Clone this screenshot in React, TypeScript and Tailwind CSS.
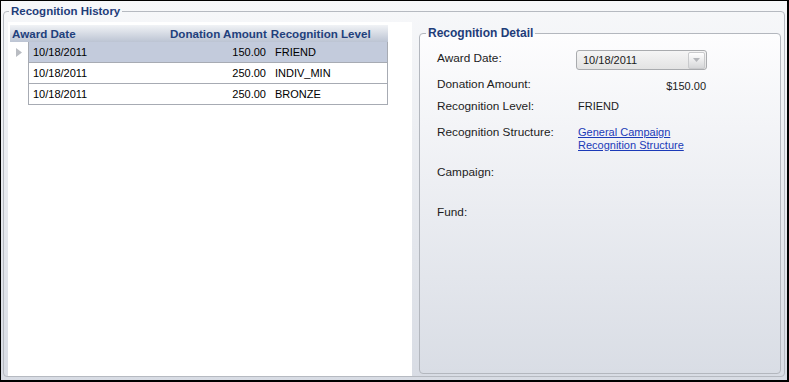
import React from "react";

const rows = [
  { date: "10/18/2011", amount: "150.00", level: "FRIEND", selected: true },
  { date: "10/18/2011", amount: "250.00", level: "INDIV_MIN", selected: false },
  { date: "10/18/2011", amount: "250.00", level: "BRONZE", selected: false },
];

function HistoryGrid() {
  return (
    <div className="mt-[3px] ml-[2px] w-[378px]">
      <div className="flex h-[17px] items-center bg-gradient-to-b from-[#f1f3f6] to-[#bcc4d3] text-[11.6px] font-bold leading-[17px] text-[#22407c]">
        <div className="w-[160px] pl-[2px]">Award Date</div>
        <div>Donation Amount</div>
        <div className="ml-[4px]">Recognition Level</div>
      </div>
      {rows.map((r, i) => (
        <div key={i} className="flex h-[21px]">
          <div className="flex w-[18px] items-center justify-center">
            {r.selected && (
              <svg width="6" height="9" viewBox="0 0 6 9">
                <path d="M0 0 L6 4.5 L0 9 Z" fill="#b9bcc2" />
              </svg>
            )}
          </div>
          <div
            className={`flex w-[360px] items-center border-x border-b border-[#a7abb3] text-[11px] text-black ${
              r.selected ? "bg-[#c3cbdc]" : "bg-white"
            }`}
          >
            <div className="w-[130px] pl-[4px]">{r.date}</div>
            <div className="w-[108px] pr-[1px] text-right">{r.amount}</div>
            <div className="pl-[8px]">{r.level}</div>
          </div>
        </div>
      ))}
    </div>
  );
}

function Label({ children }: { children: React.ReactNode }) {
  return <div className="w-[139px] shrink-0 leading-[16px]">{children}</div>;
}

function RecognitionDetail() {
  return (
    <fieldset className="mt-[3px] mb-[2px] flex-1 rounded-[4px] border border-[#b3b7be] bg-gradient-to-b from-[#fdfdfe] to-[#d9dde5]">
      <legend className="ml-[6px] px-[2px] text-[12px] font-bold leading-[16px] text-[#1f3d7a]">
        Recognition Detail
      </legend>
      <div className="pl-[17px] pt-[9px] text-[11.8px] text-[#1c1c1c]">
        <div className="flex h-[26px]">
          <Label>Award Date:</Label>
          <div className="flex h-[20px] w-[131px] items-center justify-between rounded-[3px] border border-[#a9abae] bg-gradient-to-b from-[#f5f5f5] to-[#e3e3e3] pl-[6px] pr-[1px] text-[11px]">
            <span>10/18/2011</span>
            <div className="flex h-[17px] w-[17px] items-center justify-center rounded-[2px] border border-[#c9cacc] bg-gradient-to-b from-white to-[#d6d7d9]">
              <svg width="7" height="4" viewBox="0 0 7 4">
                <path d="M0 0 L7 0 L3.5 4 Z" fill="#b4b6ba" />
              </svg>
            </div>
          </div>
        </div>
        <div className="flex h-[22px]">
          <Label>Donation Amount:</Label>
          <div className="w-[130px] pt-[2px] text-right text-[11px] leading-[16px]">$150.00</div>
        </div>
        <div className="flex h-[26px]">
          <Label>Recognition Level:</Label>
          <div className="pl-[2px] text-[11px] leading-[16px]">FRIEND</div>
        </div>
        <div className="flex h-[40px]">
          <Label>Recognition Structure:</Label>
          <div className="mt-[2px] pl-[2px] text-[11px] leading-[13px]">
            <a href="#" className="text-[#1b3ab8] underline">
              General Campaign
              <br />
              Recognition Structure
            </a>
          </div>
        </div>
        <div className="flex h-[40px]">
          <Label>Campaign:</Label>
        </div>
        <div className="flex h-[40px]">
          <Label>Fund:</Label>
        </div>
      </div>
    </fieldset>
  );
}

export default function App() {
  return (
    <div className="h-[382px] w-[789px] border-t border-l border-r-2 border-b-2 border-black bg-gradient-to-b from-[#f7f8fa] to-[#d8dce4] pt-[2px] pb-[3px] pl-[2px] pr-[2px] font-['Liberation_Sans',Arial,sans-serif]">
      <fieldset className="flex h-full flex-col rounded-[4px] border border-[#b6bac1] pl-[4px] pr-[3px] pt-[3px]">
        <legend className="ml-[1px] px-[2px] text-[11.5px] font-bold leading-[16px] text-[#1f3d7a]">
          Recognition History
        </legend>
        <div className="flex flex-1 gap-[7px]">
          <div className="w-[404px] bg-white">
            <HistoryGrid />
          </div>
          <div className="flex flex-1 flex-col">
            <RecognitionDetail />
          </div>
        </div>
      </fieldset>
    </div>
  );
}
